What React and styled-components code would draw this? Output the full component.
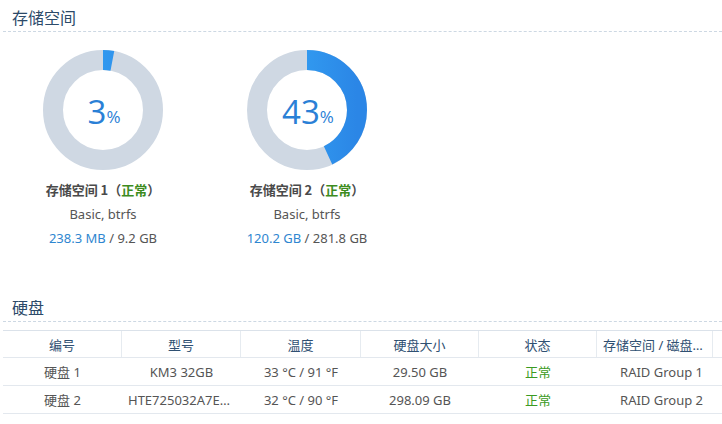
import React from "react";
import styled, { createGlobalStyle } from "styled-components";

const GlobalStyle = createGlobalStyle`
  body {
    margin: 0;
    background: #ffffff;
    font-family: "Noto Sans", "Noto Sans CJK SC", sans-serif;
  }
`;

const Page = styled.div`
  width: 722px;
  height: 424px;
  overflow: hidden;
  background: #fff;
`;

const SectionTitle = styled.div`
  height: 31px;
  margin-left: 3px;
  padding-left: 9px;
  border-bottom: 1px dashed #cdd8e3;
  font-family: "Noto Sans CJK SC", sans-serif;
  font-size: 16px;
  line-height: 35px;
  color: #2c4a69;
  margin-top: ${props => props.top || 0}px;
`;

const Volumes = styled.div`
  display: flex;
  gap: 4px;
  padding: 18px 0 0 3px;
`;

const Volume = styled.div`
  width: 200px;
  display: flex;
  flex-direction: column;
  align-items: center;
`;

const DonutWrap = styled.div`
  position: relative;
  width: 120px;
  height: 120px;
  margin-bottom: 8px;
`;

const Percent = styled.div`
  position: absolute;
  inset: 0;
  display: flex;
  align-items: center;
  justify-content: center;
  color: #2a80d6;
  font-family: "Open Sans", sans-serif;
  font-size: 33px;
  padding-top: 2px;
  padding-left: 2px;

  & span {
    font-size: 17px;
    margin-top: 10px;
  }
`;

const Line = styled.div`
  font-size: 13px;
  line-height: 24px;
  color: #555;
  white-space: nowrap;
`;

const Name = styled(Line)`
  font-family: "Noto Sans CJK SC", sans-serif;
  font-weight: bold;
  color: #4a4a4a;
`;

const Ok = styled.span`
  color: #3d8c1e;
`;

const Used = styled.span`
  color: #2e86d0;
`;

const Table = styled.div`
  margin: 8px 0 0 3px;
  width: 719px;
`;

const Row = styled.div`
  display: grid;
  grid-template-columns: 119px 119px 120px 118px 118px 116px 9px;
  height: ${props => (props.head ? 26 : 27)}px;
  border-bottom: 1px solid #e3e8ee;
  border-top: ${props => (props.head ? "1px solid #dbe2ea" : "none")};
  font-family: "Noto Sans", "Noto Sans CJK SC", sans-serif;
  font-size: 13px;
  color: ${props => (props.head ? "#2f5072" : "#555")};
`;

const Cell = styled.div`
  display: flex;
  align-items: center;
  justify-content: ${props => (props.right ? "flex-end" : "center")};
  padding: 0 ${props => (props.right ? 10 : 6)}px 0 6px;
  border-right: ${props => (props.head ? "1px solid #e6ebf0" : "none")};
  overflow: hidden;
  white-space: nowrap;
  color: ${props => (props.ok ? "#3a9a22" : "inherit")};

  & span {
    overflow: hidden;
    text-overflow: ellipsis;
  }
`;

function Donut({ pct, id }) {
  const r = 50;
  const c = 2 * Math.PI * r;
  return (
    <DonutWrap>
      <svg width="120" height="120" viewBox="0 0 120 120">
        <defs>
          <linearGradient id={id} x1="0" y1="0" x2="0" y2="1">
            <stop offset="0" stopColor="#36aaf8" />
            <stop offset="1" stopColor="#2b86e6" />
          </linearGradient>
        </defs>
        <circle cx="60" cy="60" r={r} fill="none" stroke="#cfd8e3" strokeWidth="20" />
        <circle
          cx="60"
          cy="60"
          r={r}
          fill="none"
          stroke={`url(#${id})`}
          strokeWidth="20"
          strokeDasharray={`${(c * pct) / 100} ${c}`}
          transform="rotate(-90 60 60)"
        />
      </svg>
      <Percent>
        {pct}
        <span>%</span>
      </Percent>
    </DonutWrap>
  );
}

const volumes = [
  { n: 1, pct: 3, used: "238.3 MB", total: "9.2 GB" },
  { n: 2, pct: 43, used: "120.2 GB", total: "281.8 GB" },
];

const disks = [
  ["硬盘 1", "KM3 32GB", "33 °C / 91 °F", "29.50 GB", "RAID Group 1"],
  ["硬盘 2", "HTE725032A7E640", "32 °C / 90 °F", "298.09 GB", "RAID Group 2"],
];

export default function App() {
  return (
    <Page>
      <GlobalStyle />
      <SectionTitle>存储空间</SectionTitle>
      <Volumes>
        {volumes.map(v => (
          <Volume key={v.n}>
            <Donut pct={v.pct} id={`g${v.n}`} />
            <Name>
              存储空间 {v.n}（<Ok>正常</Ok>）
            </Name>
            <Line>Basic, btrfs</Line>
            <Line>
              <Used>{v.used}</Used> / {v.total}
            </Line>
          </Volume>
        ))}
      </Volumes>
      <SectionTitle top={40}>硬盘</SectionTitle>
      <Table>
        <Row head>
          <Cell head>编号</Cell>
          <Cell head>型号</Cell>
          <Cell head>温度</Cell>
          <Cell head>硬盘大小</Cell>
          <Cell head>状态</Cell>
          <Cell head>
            <span>存储空间 / 磁盘群组</span>
          </Cell>
          <Cell />
        </Row>
        {disks.map(d => (
          <Row key={d[0]}>
            <Cell>{d[0]}</Cell>
            <Cell>
              <span>{d[1]}</span>
            </Cell>
            <Cell>{d[2]}</Cell>
            <Cell>{d[3]}</Cell>
            <Cell ok>正常</Cell>
            <Cell right>{d[4]}</Cell>
            <Cell />
          </Row>
        ))}
      </Table>
    </Page>
  );
}
